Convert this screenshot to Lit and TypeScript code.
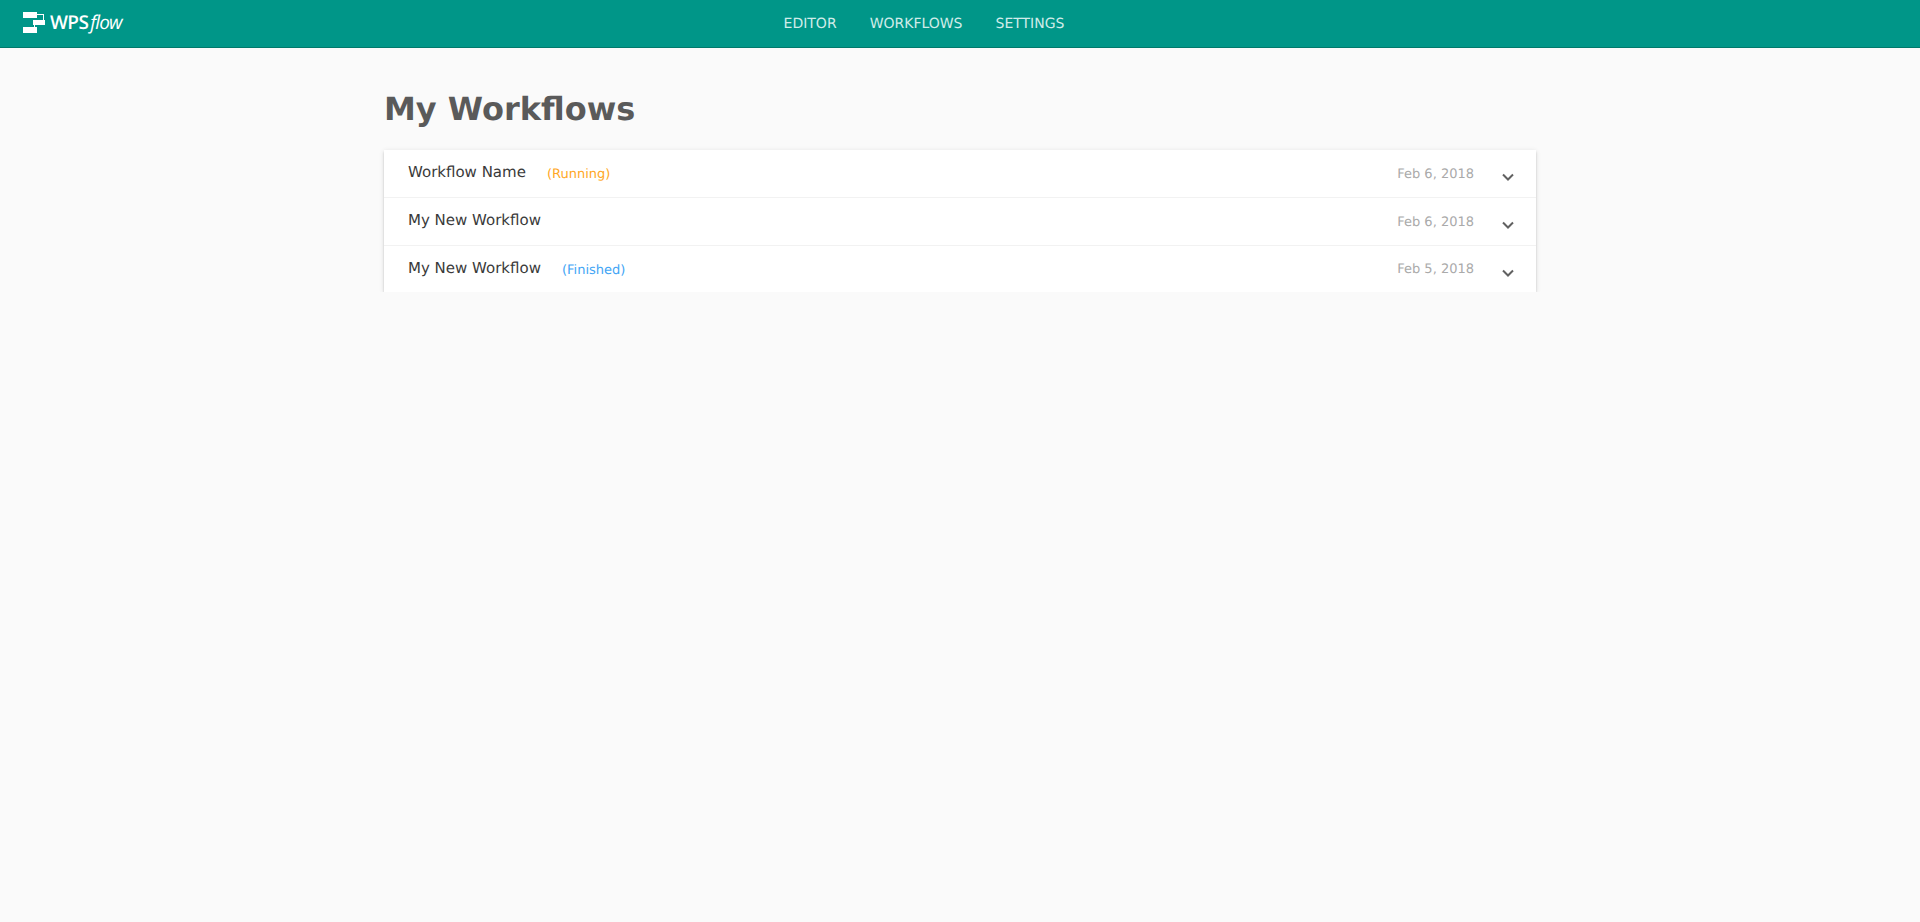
import { LitElement, html, css } from "lit";
import { customElement } from "lit/decorators.js";

const rows = [
  { name: "Workflow Name", status: "(Running)", cls: "running", date: "Feb 6, 2018" },
  { name: "My New Workflow", status: "", cls: "", date: "Feb 6, 2018" },
  { name: "My New Workflow", status: "(Finished)", cls: "finished", date: "Feb 5, 2018" },
];

@customElement("app-root")
export class AppRoot extends LitElement {
  static styles = css`
    :host { display: block; min-height: 922px; background: #fafafa; font-family: "DejaVu Sans", sans-serif; text-rendering: geometricPrecision; }
    header { position: relative; height: 47px; background: #009688; border-bottom: 1px solid #00796b; display: flex; justify-content: center; }
    .logo { position: absolute; left: 23px; top: 11px; display: flex; align-items: center; height: 22px; color: #fff; }
    .logo svg { display: block; margin-right: 4px; }
    .wps { font: 600 19px "Open Sans", sans-serif; letter-spacing: -0.6px; }
    .flow { font: italic 400 19px "Open Sans", sans-serif; letter-spacing: -0.9px; margin-left: 2px; }
    nav { display: flex; align-items: center; gap: 33px; font-size: 14px; color: #d0ece9; margin-left: -72px; }
    main { width: 1152px; margin: 0 auto; }
    h1 { margin: 0; padding-top: 41px; font-size: 32px; line-height: 40px; font-weight: 700; color: #5a5a5a; box-sizing: border-box; height: 102px; }
    .list { box-shadow: 0 2px 2px 0 rgba(0,0,0,0.14), 0 3px 1px -2px rgba(0,0,0,0.2), 0 1px 5px 0 rgba(0,0,0,0.12); clip-path: inset(-6px -6px 0 -6px); }
    .row { height: 47px; background: #fff; display: flex; align-items: center; padding: 0 21px 0 24px; border-bottom: 1px solid #f2f2f2; }
    .row:last-child { border-bottom: none; height: 46px; }
    .name { font-size: 15px; color: #3a3a3a; padding-bottom: 3px; }
    .status { font-size: 13px; margin-left: 21px; padding-top: 2px; }
    .running { color: #ffa726; }
    .finished { color: #42a5f5; }
    .date { margin-left: auto; font-size: 13px; color: #aaa; padding-top: 1px; }
    .chev { margin-left: 27px; display: block; margin-top: 7px; }
  `;

  render() {
    return html`
      <header>
        <div class="logo">
          <svg width="23" height="21" viewBox="0 0 23 21" fill="#fff">
            <rect x="0" y="0" width="14" height="6" />
            <rect x="0" y="15" width="14" height="6" />
            <rect x="10" y="8" width="12" height="5" />
            <path d="M14 2h7v6h-1V3h-6zM11 13h1v2h-1z" />
          </svg>
          <span class="wps">WPS</span><span class="flow">flow</span>
        </div>
        <nav><span>EDITOR</span><span>WORKFLOWS</span><span>SETTINGS</span></nav>
      </header>
      <main>
        <h1>My Workflows</h1>
        <div class="list">
          ${rows.map(r => html`
            <div class="row">
              <span class="name">${r.name}</span>
              ${r.status ? html`<span class="status ${r.cls}">${r.status}</span>` : ""}
              <span class="date">${r.date}</span>
              <svg class="chev" width="14" height="14" viewBox="0 0 14 14" fill="none" stroke="#616161" stroke-width="2"><path d="M2 4.5l5 5 5-5"/></svg>
            </div>`)}
        </div>
      </main>
    `;
  }
}
